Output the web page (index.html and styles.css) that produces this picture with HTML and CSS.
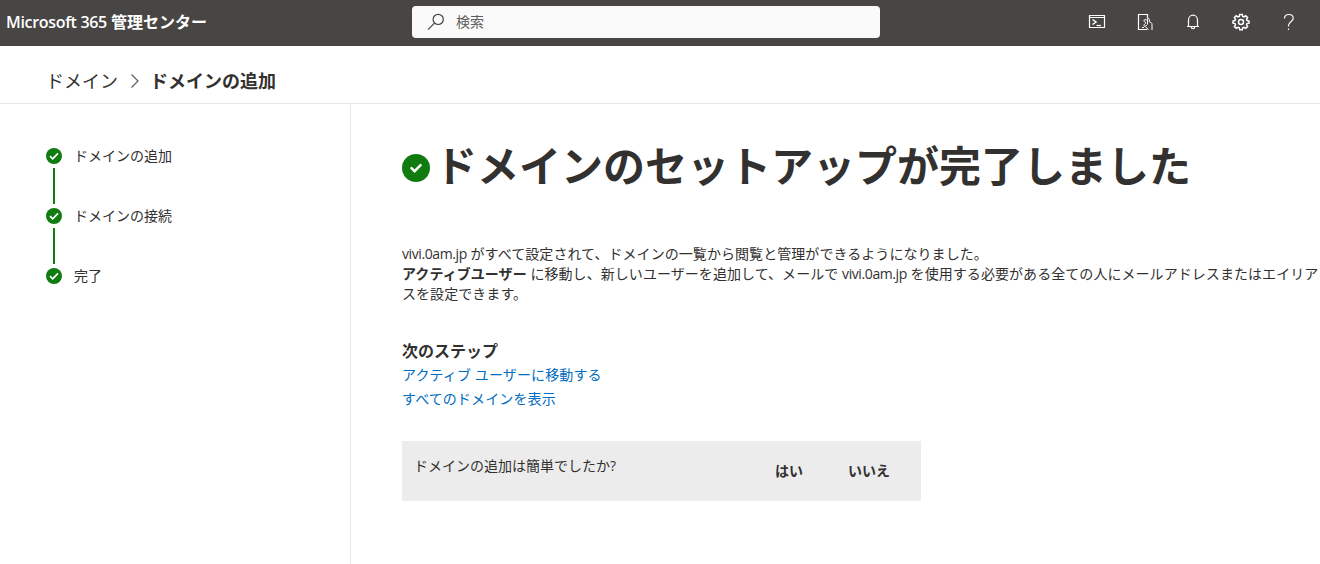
FILE: index.html
```html
<!DOCTYPE html>
<html lang="ja">

<head>
    <meta charset="UTF-8">
    <meta name="viewport" content="width=device-width, initial-scale=1.0">
    <title>Microsoft 365 管理センター</title>
    <link rel="stylesheet" href="styles.css">
</head>

<body>
    <header class="topbar">
        <div class="brand"><span class="brand-latin">Microsoft 365</span> 管理センター</div>
        <div class="search">
            <svg class="search-icon" width="18" height="18" viewBox="0 0 18 18">
                <circle cx="11.2" cy="6.4" r="5.1" />
                <path d="M7.5 10.1L1 16.6" />
            </svg>
            <span>検索</span>
        </div>
        <nav class="tools">
            <svg width="18" height="18" viewBox="0 0 18 18">
                <path d="M1.5 2.5h15v12h-15zM1.5 4.5h15" />
                <path class="bold" d="M4.5 6.5l3.5 2.5-3.5 2.5" />
                <path d="M8.5 12.5h4.5" />
            </svg>
            <svg width="18" height="18" viewBox="0 0 18 18">
                <path d="M11 16.5H2.5v-15h9v4" />
                <path class="thin" d="M11.5 11V6.5c0-1.5 1.8-1.5 1.8 0V9c1.7.3 2.7.9 2.7 2.5v5.5M11.5 7.5C10.5 6.300 7.500 6.300 7.800 8c.2 1 2.200.8 1.900 2.200-.2 1-2.300 1.200-1.800 2.600.5 1.200 2.500.2 3.600-1.400M9.500 13.500l3 3.500M6 14.500h2" />
            </svg>
            <svg width="18" height="18" viewBox="0 0 18 18">
                <path d="M3 13.5h12M4.5 13.5V7a4.500 4.800 0 0 1 9 0v6.500M7.200 14c.2 2.200 3.400 2.200 3.600 0" />
            </svg>
            <svg width="18" height="18" viewBox="0 0 18 18">
                <path class="bold" d="M7.7 1.400h2.600l.4 2 1.300.5 1.800-1.100 1.800 1.800-1.100 1.800.5 1.200 2 .4v2.200l-2 .4-.5 1.200 1.100 1.800-1.800 1.800-1.800-1.100-1.300.5-.4 2H7.700l-.4-2-1.300-.5-1.800 1.100-1.800-1.800 1.100-1.800-.5-1.200-2-.4V8l2-.4.5-1.200-1.100-1.800 1.800-1.800L6 3.900l1.300-.5z" />
                <circle class="bold" cx="9" cy="9.1" r="2.500" />
            </svg>
            <svg width="18" height="18" viewBox="0 0 18 18">
                <path d="M4.5 5.500C4.500 2.800 6.300 1.500 8.800 1.500s4.400 1.500 4.400 3.800c0 3.200-4.700 3.700-4.700 7.200v1M8.500 15.500v1.500" />
            </svg>
        </nav>
    </header>

    <div class="breadcrumb">
        <span>ドメイン</span>
        <svg class="chevron" width="10" height="16" viewBox="0 0 10 16">
            <path d="M1.5 1.5L8 8l-6.5 6.5" />
        </svg>
        <strong>ドメインの追加</strong>
    </div>

    <div class="layout">
        <aside class="steps">
            <div class="step">
                <svg class="check" width="16" height="16" viewBox="0 0 16 16">
                    <circle cx="8" cy="8" r="8" />
                    <path d="M4 8.2l2.7 2.6L12 5.3" />
                </svg>
                <span>ドメインの追加</span>
            </div>
            <div class="line"></div>
            <div class="step">
                <svg class="check" width="16" height="16" viewBox="0 0 16 16">
                    <circle cx="8" cy="8" r="8" />
                    <path d="M4 8.2l2.7 2.6L12 5.3" />
                </svg>
                <span>ドメインの接続</span>
            </div>
            <div class="line"></div>
            <div class="step">
                <svg class="check" width="16" height="16" viewBox="0 0 16 16">
                    <circle cx="8" cy="8" r="8" />
                    <path d="M4 8.2l2.7 2.6L12 5.3" />
                </svg>
                <span>完了</span>
            </div>
        </aside>

        <main class="content">
            <div class="title">
                <svg class="check big" width="28" height="28" viewBox="0 0 28 28">
                    <circle cx="14" cy="14" r="14" />
                    <path d="M9.5 14.2l3.1 3 6-6" />
                </svg>
                <h1>ドメインのセットアップが完了しました</h1>
            </div>
            <p class="message">
                <span class="domain">vivi.0am.jp</span> がすべて設定されて、ドメインの一覧から閲覧と管理ができるようになりました。<br>
                <strong>アクティブユーザー</strong> に移動し、新しいユーザーを追加して、メールで <span class="domain">vivi.0am.jp</span> を使用する必要がある全ての人にメールアドレスまたはエイリア<br>
                スを設定できます。
            </p>
            <h2>次のステップ</h2>
            <a class="link" href="#">アクティブ ユーザーに移動する</a>
            <a class="link" href="#">すべてのドメインを表示</a>
            <div class="survey">
                <span class="question">ドメインの追加は簡単でしたか?</span>
                <button class="answer">はい</button>
                <button class="answer">いいえ</button>
            </div>
        </main>
    </div>
</body>

</html>
```
FILE: styles.css
```css
* {
    margin: 0;
    padding: 0;
    box-sizing: border-box;
}

body {
    height: 564px;
    overflow: hidden;
    display: flex;
    flex-direction: column;
    background-color: #fff;
    color: #323130;
    font-family: "Open Sans", "Noto Sans CJK JP", sans-serif;
    font-size: 14px;
    line-height: 20px;
    white-space: nowrap;
}

svg {
    display: block;
    flex: none;
    fill: none;
    stroke-width: 1.2;
}

.topbar {
    flex: none;
    display: flex;
    align-items: center;
    height: 46px;
    padding: 0 22px 2px 6px;
    background-color: #484644;
    color: #fff;
}

.brand {
    width: 406px;
    font-size: 16px;
    font-weight: 600;
}

.brand-latin {
    letter-spacing: -0.32px;
}

.search {
    display: flex;
    align-items: center;
    gap: 11px;
    width: 468px;
    height: 32px;
    padding-left: 15px;
    border-radius: 4px;
    background-color: #fafafa;
    color: #605e5c;
}

.search-icon {
    stroke: #484644;
}

.tools {
    display: flex;
    gap: 30px;
    margin-left: auto;
}

.tools svg {
    stroke: #fff;
}

.tools .thin {
    stroke-width: 1;
}

.tools .bold {
    stroke-width: 1.5;
}

.breadcrumb {
    flex: none;
    display: flex;
    align-items: center;
    height: 58px;
    padding: 12px 0 0 46px;
    border-bottom: 1px solid #e6e6e6;
    font-size: 18px;
}

.chevron {
    margin: 0 10px 0 12px;
    stroke: #605e5c;
}

.layout {
    flex: 1;
    display: flex;
}

.steps {
    width: 351px;
    padding: 42px 0 0 46px;
    border-right: 1px solid #e6e6e6;
}

.step {
    display: flex;
    align-items: center;
    gap: 12px;
}

.line {
    width: 2px;
    height: 36px;
    margin: 2px 0 2px 7px;
    background-color: #107c10;
}

.check {
    fill: #107c10;
}

.check path {
    fill: none;
    stroke: #fff;
    stroke-width: 1.7;
}

.check.big path {
    stroke-width: 2.5;
    stroke-linecap: round;
}

.content {
    flex: 1;
    padding: 32px 0 0 51px;
}

.title {
    display: flex;
    align-items: center;
    gap: 5px;
    height: 60px;
}

.check.big {
    margin-top: 4px;
}

h1 {
    font-size: 42px;
    line-height: 60px;
    font-weight: 700;
}

.message {
    margin-top: 48px;
    letter-spacing: 0.06px;
}

.domain {
    letter-spacing: -0.4px;
}

h2 {
    margin-top: 35px;
    font-size: 16px;
    line-height: 24px;
}

.link {
    display: block;
    line-height: 24px;
    letter-spacing: 0.12px;
    color: #006cbe;
    text-decoration: none;
}

.survey {
    display: flex;
    width: 519px;
    height: 60px;
    margin-top: 30px;
    padding-left: 12px;
    background-color: #ececec;
}

.question {
    flex: none;
    width: 361px;
    padding-top: 15px;
}

.answer {
    flex: none;
    height: 58px;
    margin-right: 45px;
    border: none;
    background: none;
    color: #323130;
    font-family: inherit;
    font-size: 14px;
    font-weight: 700;
    cursor: pointer;
}
```
